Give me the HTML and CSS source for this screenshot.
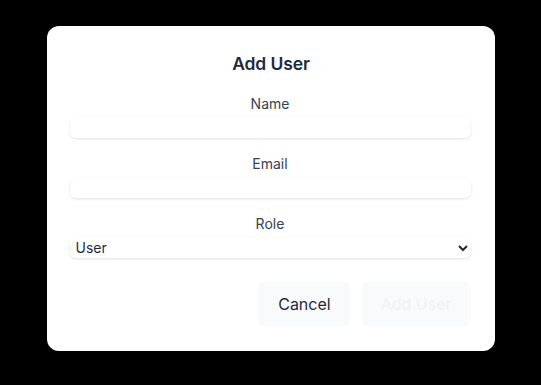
FILE: index.html
```html
<!DOCTYPE html>
<html>
<head>
<meta charset="utf-8">
<link rel="stylesheet" href="styles.css">
</head>
<body>
<div class="overlay">
  <form class="modal">
    <h2 class="title">Add User</h2>
    <div class="field">
      <label class="label">Name</label>
      <input class="input" type="text">
    </div>
    <div class="field">
      <label class="label">Email</label>
      <input class="input" type="email">
    </div>
    <div class="field">
      <label class="label">Role</label>
      <select class="select">
        <option>User</option>
        <option>Admin</option>
      </select>
    </div>
    <div class="actions">
      <button type="button" class="btn">Cancel</button>
      <button type="button" class="btn btn-disabled" disabled>Add User</button>
    </div>
  </form>
</div>
</body>
</html>
```

FILE: styles.css
```css
html, body {
  margin: 0;
  padding: 0;
  background: #000;
  font-family: Inter, "Noto Sans", sans-serif;
}
.overlay {
  width: 541px;
  height: 385px;
  display: flex;
  justify-content: center;
  padding-top: 26px;
  box-sizing: border-box;
}
.modal {
  width: 448px;
  height: 325px;
  box-sizing: border-box;
  background: #fff;
  border-radius: 12px;
  padding: 24px 24px 24px 23px;
  display: flex;
  flex-direction: column;
}
.title {
  margin: 0;
  font-size: 17.5px;
  line-height: 28px;
  font-weight: 600;
  color: #1e293b;
  text-align: center;
  letter-spacing: -0.1px;
  padding-left: 2px;
}
.field {
  display: flex;
  flex-direction: column;
  margin-top: 16px;
}
.label {
  font-size: 14px;
  line-height: 20px;
  color: #374151;
  text-align: center;
  margin-bottom: 4px;
}
.input {
  height: 20px;
  border: none;
  border-radius: 6px;
  box-shadow: 0 1px 3px rgba(0,0,0,0.12);
  padding: 0 4px;
  outline: none;
  font-family: inherit;
  background: #fff;
}
.select {
  height: 20px;
  border: none;
  border-radius: 6px;
  box-shadow: 0 1px 3px rgba(0,0,0,0.12);
  font-family: inherit;
  font-size: 14px;
  line-height: 18px;
  color: #1f2937;
  background: #fff;
  padding: 0 2px 2px;
  outline: none;
}
.actions {
  display: flex;
  justify-content: flex-end;
  gap: 12px;
  margin-top: 23px;
}
.btn {
  height: 46px;
  padding: 0 19px 0 20px;
  border: none;
  border-radius: 8px;
  background: #f9fafb;
  font-family: inherit;
  font-size: 16px;
  color: #1e293b;
  white-space: nowrap;
}
.btn-disabled {
  color: #f0f1f3;
  padding: 0 19px;
}
```
